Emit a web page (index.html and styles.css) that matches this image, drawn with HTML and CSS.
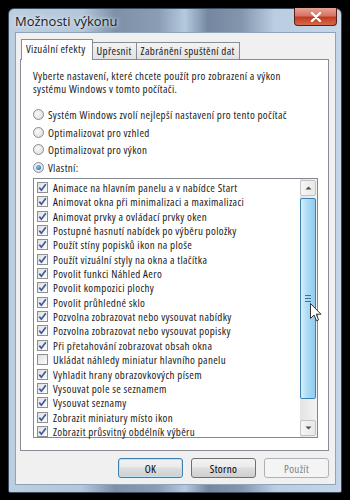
FILE: index.html
```html
<!DOCTYPE html>
<html lang="cs">
<head>
    <meta charset="UTF-8">
    <title>Možnosti výkonu</title>
    <link rel="stylesheet" href="styles.css">
</head>
<body>
    <div class="window">
        <!-- Title bar -->
        <div class="titlebar">
            <span class="title">Možnosti výkonu</span>
            <div class="close">
                <svg width="12" height="10" viewBox="0 0 12 10"><path d="M2 1 L10 9 M10 1 L2 9" stroke="#fff" stroke-width="2.4" stroke-linecap="round"/></svg>
            </div>
        </div>

        <div class="client">
            <div class="tabs">
                <div class="tab active">Vizuální efekty</div>
                <div class="tab">Upřesnit</div>
                <div class="tab">Zabránění spuštění dat</div>
            </div>

            <div class="panel">
                <p class="intro">Vyberte nastavení, které chcete použít pro zobrazení a výkon<br>systému Windows v tomto počítači.</p>

                <div class="radios">
                    <div class="radio-row"><span class="radio"></span>Systém Windows zvolí nejlepší nastavení pro tento počítač</div>
                    <div class="radio-row"><span class="radio"></span>Optimalizovat pro vzhled</div>
                    <div class="radio-row"><span class="radio"></span>Optimalizovat pro výkon</div>
                    <div class="radio-row"><span class="radio checked"></span>Vlastní:</div>
                </div>

                <div class="listbox">
                    <div class="items" id="items"></div>
                    <div class="scrollbar">
                        <div class="sb-btn"><svg width="7" height="4" viewBox="0 0 7 4"><path d="M0.5 3.5 L3.5 0.5 L6.5 3.5Z" fill="#4d4d4d"/></svg></div>
                        <div class="sb-track">
                            <div class="sb-thumb"><span class="grip"></span></div>
                        </div>
                        <div class="sb-btn"><svg width="7" height="4" viewBox="0 0 7 4"><path d="M0.5 0.5 L3.5 3.5 L6.5 0.5Z" fill="#4d4d4d"/></svg></div>
                    </div>
                    <svg class="cursor" width="12" height="19" viewBox="0 0 12 19"><path d="M0.5 0.5 L0.5 15.5 L4 12 L6.5 17.8 L8.6 16.9 L6.2 11.2 L11 11.2 Z" fill="#fff" stroke="#333" stroke-width="1" stroke-linejoin="round"/></svg>
                </div>
            </div>

            <div class="buttons">
                <button class="btn default">OK</button>
                <button class="btn">Storno</button>
                <button class="btn disabled">Použít</button>
            </div>
        </div>
    </div>

    <script>
        const effects = [
            ['Animace na hlavním panelu a v nabídce Start', true],
            ['Animovat okna při minimalizaci a maximalizaci', true],
            ['Animovat prvky a ovládací prvky oken', true],
            ['Postupné hasnutí nabídek po výběru položky', true],
            ['Použít stíny popisků ikon na ploše', true],
            ['Použít vizuální styly na okna a tlačítka', true],
            ['Povolit funkci Náhled Aero', true],
            ['Povolit kompozici plochy', true],
            ['Povolit průhledné sklo', true],
            ['Pozvolna zobrazovat nebo vysouvat nabídky', true],
            ['Pozvolna zobrazovat nebo vysouvat popisky', true],
            ['Při přetahování zobrazovat obsah okna', true],
            ['Ukládat náhledy miniatur hlavního panelu', false],
            ['Vyhladit hrany obrazovkových písem', true],
            ['Vysouvat pole se seznamem', true],
            ['Vysouvat seznamy', true],
            ['Zobrazit miniatury místo ikon', true],
            ['Zobrazit průsvitný obdélník výběru', true]
        ];

        const check = '<svg width="9" height="9" viewBox="0 0 9 9"><path d="M1.3 4.6 L3.4 7.2 L7.8 1.2" fill="none" stroke="#3d5a9e" stroke-width="1.7"/></svg>';
        const list = document.getElementById('items');
        effects.forEach(function (e) {
            const row = document.createElement('div');
            row.className = 'item';
            row.innerHTML = '<span class="checkbox">' + (e[1] ? check : '') + '</span>' + e[0];
            list.appendChild(row);
        });
    </script>
</body>
</html>
```

FILE: styles.css
```css
body {
    margin: 0;
    background-color: #000;
    font-family: "Open Sans", sans-serif;
    font-stretch: 81%;
    font-size: 11px;
    letter-spacing: 0.35px;
    color: #1b1b1b;
}
.window {
    margin: 8px;
    width: 334px;
    height: 485px;
    box-sizing: border-box;
    padding: 0 5px 7px 6px;
    border: 1px solid #3a4a5c;
    border-radius: 6px 6px 2px 2px;
    background: linear-gradient(90deg, #bccfe1 0%, #b3c6da 22%, #7d90a8 32%, #8a9db4 45%, #b5cade 53%, #7487a0 60%, #8496ad 70%, #bacde1 80%, #c4d6e8 100%);
    display: flex;
    flex-direction: column;
}
.titlebar {
    height: 23px;
    display: flex;
    align-items: flex-start;
    justify-content: space-between;
}
.title {
    font-size: 13px;
    font-stretch: 90%;
    letter-spacing: 0;
    color: #1a1a1a;
    padding-top: 3px;
    text-shadow: 0 0 6px #dfe9f3, 0 0 3px #e8eff6;
}
.close {
    width: 41px;
    height: 17px;
    margin-top: -1px;
    margin-right: -1px;
    border: 1px solid #5a1e16;
    border-top: none;
    border-radius: 0 0 4px 4px;
    background: linear-gradient(#e6a393 0%, #d57665 45%, #c23b22 55%, #d46a4a 100%);
    display: flex;
    align-items: center;
    justify-content: center;
}
.client {
    flex: 1;
    background-color: #f0f0f0;
    border: 1px solid #8fa3bb;
    padding: 6px 6px 0 4px;
    display: flex;
    flex-direction: column;
}
.tabs {
    display: flex;
    align-items: flex-end;
    height: 20px;
    padding-left: 2px;
    position: relative;
    z-index: 1;
}
.tab {
    height: 16px;
    padding: 0 4px;
    border: 1px solid #898c95;
    border-bottom: none;
    margin-left: -1px;
    background: linear-gradient(#f3f3f3, #e2e2e2);
    line-height: 16px;
    white-space: nowrap;
}
.tab.active {
    height: 20px;
    line-height: 18px;
    background-color: #fff;
    background-image: none;
    padding: 0 6px 0 4px;
    margin-bottom: -1px;
}
.panel {
    height: 392px;
    background-color: #fff;
    border: 1px solid #898c95;
    padding: 9px 10px 0 12px;
    box-sizing: border-box;
}
.intro {
    margin: 0;
    line-height: 13px;
    white-space: nowrap;
}
.radios {
    margin-top: 11px;
}
.radio-row {
    height: 17.6px;
    display: flex;
    align-items: center;
}
.radio {
    width: 11px;
    height: 11px;
    border: 1px solid #8c8c8c;
    border-radius: 50%;
    background: radial-gradient(circle at 40% 40%, #fafafa, #d8d8d8);
    margin: 0 4px 0 0;
    box-sizing: border-box;
    position: relative;
}
.radio.checked::after {
    content: "";
    position: absolute;
    left: 2px;
    top: 2px;
    width: 5px;
    height: 5px;
    border-radius: 50%;
    background: radial-gradient(circle at 40% 35%, #7fc7ee, #1f5d9a);
}
.listbox {
    margin-top: 2px;
    height: 260px;
    border: 1px solid #828790;
    box-sizing: border-box;
    display: flex;
    position: relative;
}
.items {
    flex: 1;
    padding: 1px 0 0 3px;
}
.item {
    height: 14.35px;
    display: flex;
    align-items: center;
    white-space: nowrap;
}
.checkbox {
    width: 11px;
    height: 11px;
    box-sizing: border-box;
    border: 1px solid #8e8f8f;
    background: linear-gradient(135deg, #e0e0e0, #fdfdfd);
    margin-right: 5px;
    display: flex;
    align-items: center;
    justify-content: center;
}
.scrollbar {
    width: 16px;
    display: flex;
    flex-direction: column;
    background: linear-gradient(90deg, #e4e4e4, #f2f2f2);
    padding: 1px 1px 1px 0;
}
.sb-btn {
    height: 16px;
    box-sizing: border-box;
    border: 1px solid #c4c4c4;
    border-radius: 2px;
    background: linear-gradient(90deg, #f6f6f6, #e8e8e8);
    display: flex;
    align-items: center;
    justify-content: center;
}
.sb-track {
    flex: 1;
    padding: 2px 0 21px;
}
.sb-thumb {
    height: 100%;
    box-sizing: border-box;
    border: 1px solid #3c7fb1;
    border-radius: 2px;
    background: linear-gradient(90deg, #d6eefb, #a8dbf5 50%, #92cbec);
    display: flex;
    align-items: center;
    justify-content: center;
}
.grip {
    width: 6px;
    height: 5px;
    border-top: 1px solid #3e6f94;
    border-bottom: 1px solid #3e6f94;
    position: relative;
}
.grip::after {
    content: "";
    position: absolute;
    left: 0;
    top: 2px;
    width: 6px;
    border-top: 1px solid #3e6f94;
}
.cursor {
    position: absolute;
    left: 276px;
    top: 124px;
}
.buttons {
    display: flex;
    justify-content: flex-end;
    gap: 8px;
    margin-top: 7px;
}
.btn {
    width: 65px;
    height: 20px;
    font-family: inherit;
    font-stretch: inherit;
    letter-spacing: inherit;
    font-size: 11px;
    border: 1px solid #707070;
    border-radius: 3px;
    background: linear-gradient(#f2f2f2 0%, #ebebeb 45%, #dddddd 50%, #cfcfcf 100%);
    color: #000;
    padding: 0;
}
.btn.default {
    border-color: #3c7fb1;
    box-shadow: inset 0 0 0 1px #b8e3f8;
}
.btn.disabled {
    border-color: #adb2b5;
    background: #f4f4f4;
    color: #838383;
}
```
